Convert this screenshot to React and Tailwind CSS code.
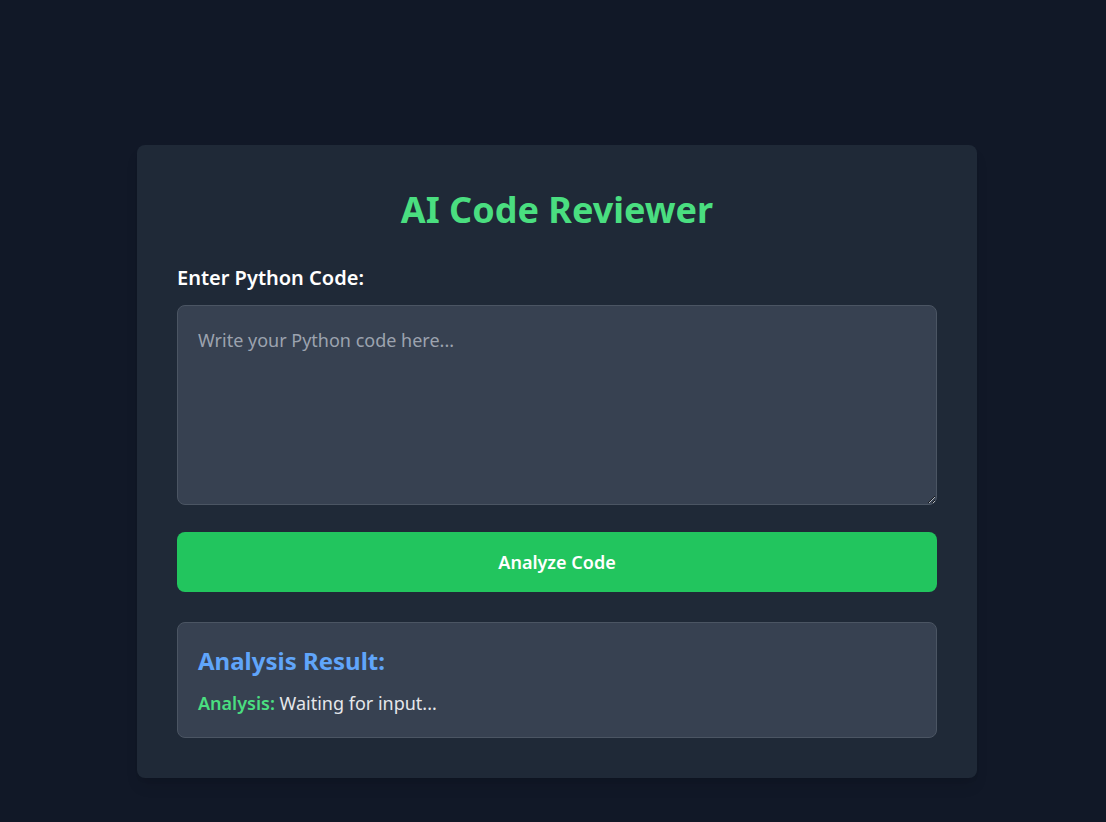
import React, { useState } from 'react';

const App = () => {
    const [code, setCode] = useState('');
    const [result] = useState('Waiting for input...');

    return (
        <div className="min-h-screen bg-[#111827] pt-[145px] pb-12 pl-6 pr-4 font-['Noto_Sans',sans-serif]">
            <div className="max-w-[840px] mx-auto bg-[#1f2937] rounded-lg shadow-lg px-10 pt-[45px] pb-10">
                <h1 className="text-4xl font-bold text-[#4ade80] text-center mb-[34px]">AI Code Reviewer</h1>

                {/* Code Input */}
                <label className="block text-xl font-semibold text-white mb-[13px]">Enter Python Code:</label>
                <textarea
                    value={code}
                    onChange={(e) => setCode(e.target.value)}
                    placeholder="Write your Python code here..."
                    className="block w-full h-[200px] p-5 bg-[#374151] border border-[#4b5563] rounded-lg text-lg text-gray-100 placeholder-[#9ca3af] outline-none"
                />

                <button className="w-full mt-[27px] py-4 bg-[#22c55e] hover:bg-[#16a34a] text-white text-lg font-semibold rounded-lg transition-colors">
                    Analyze Code
                </button>

                {/* Result */}
                <div className="mt-[30px] bg-[#374151] border border-[#4b5563] rounded-lg px-5 pt-[22px] pb-[20px]">
                    <h2 className="text-2xl font-bold text-[#60a5fa] mb-[12px]">Analysis Result:</h2>
                    <p className="text-lg text-[#e5e7eb]">
                        <span className="font-semibold text-[#4ade80]">Analysis:</span> {result}
                    </p>
                </div>
            </div>
        </div>
    );
};

export default App;
